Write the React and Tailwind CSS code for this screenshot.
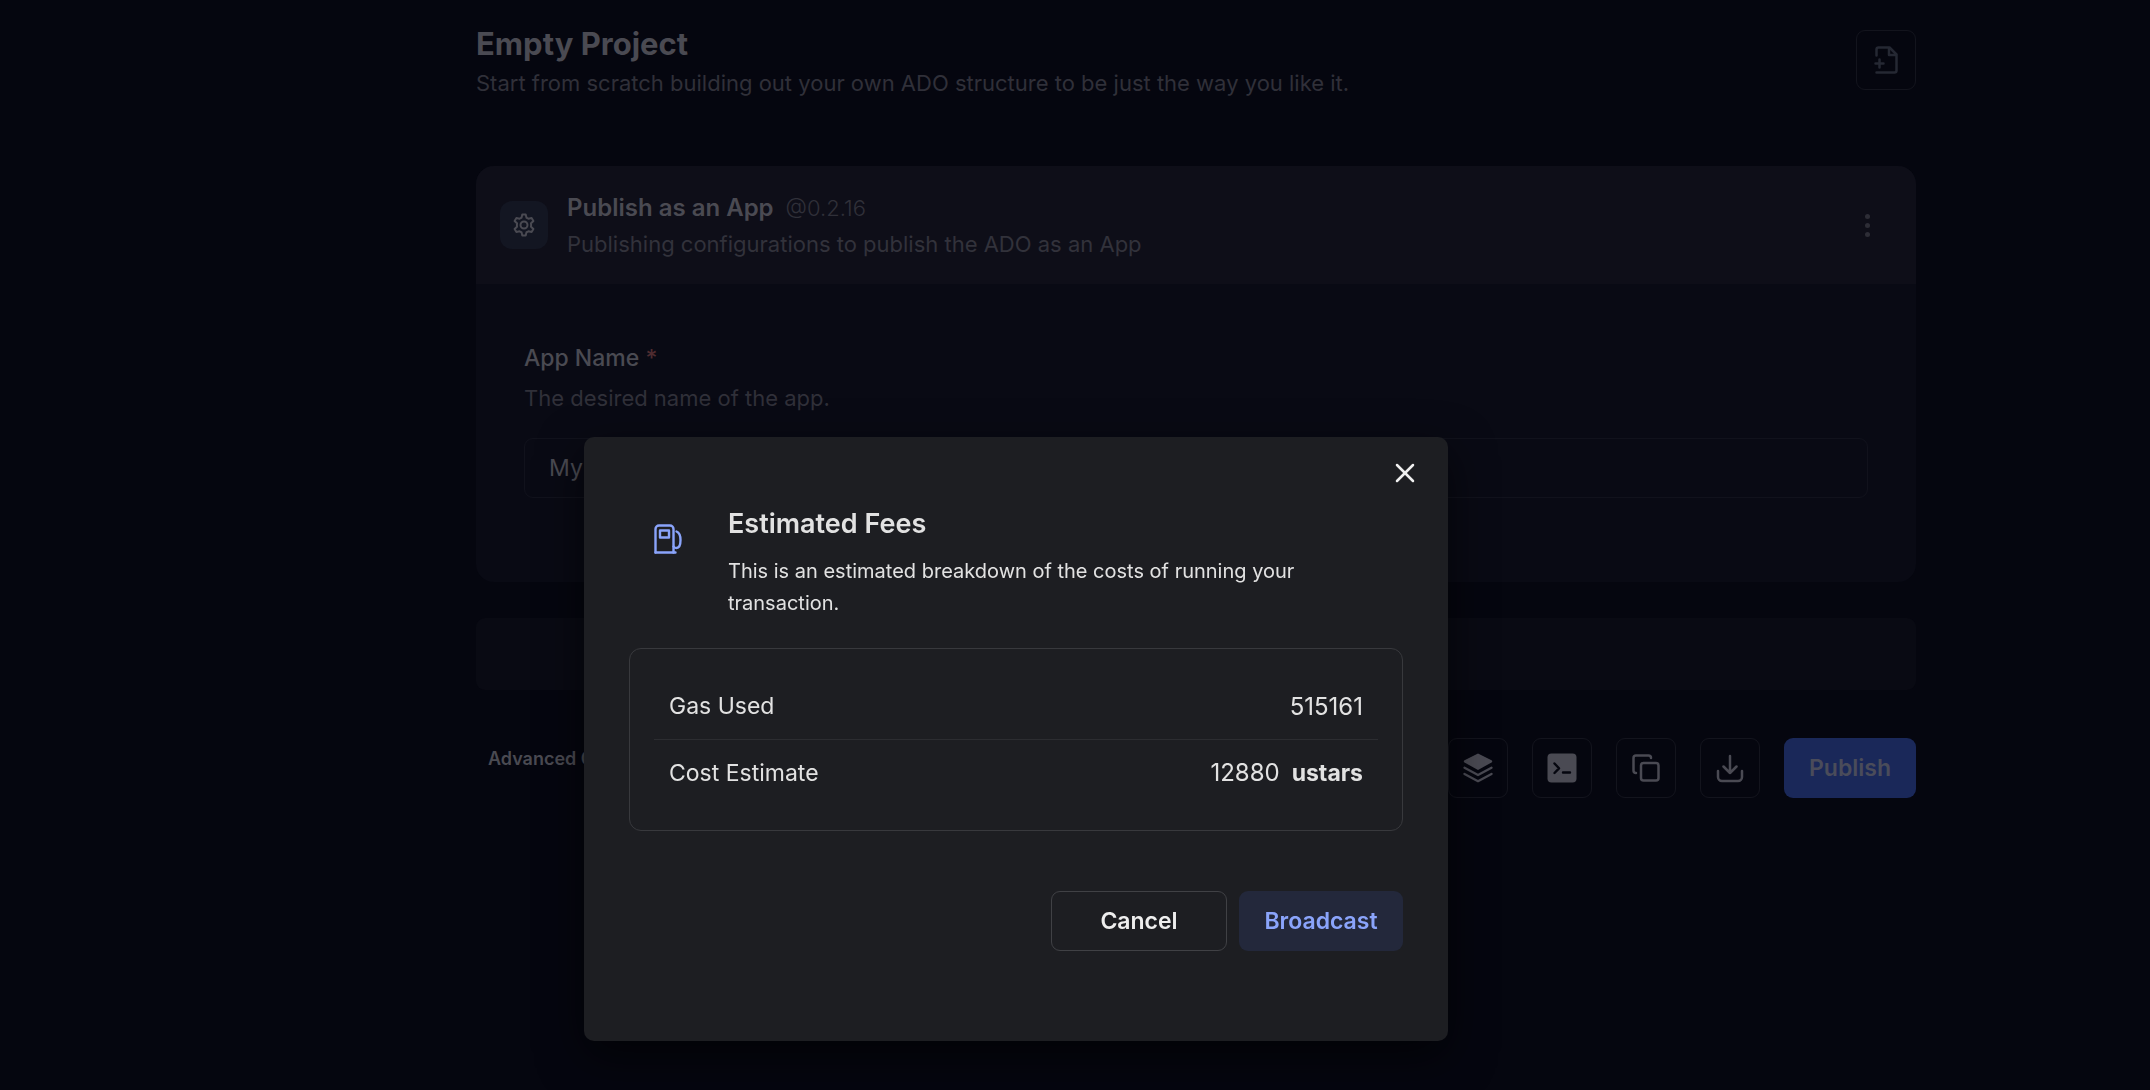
import { Copy, X } from "lucide-react";

const iconButton =
  "flex size-[60px] shrink-0 items-center justify-center rounded-[9px] border border-[#13141d] text-[#4a4a53]";

function GearIcon() {
  return (
    <svg viewBox="0 0 24 24" className="size-6 text-[#4a4a52]" fill="none" stroke="currentColor" strokeWidth="2" strokeLinejoin="round" aria-hidden="true">
      <path d="M10.300 1.500h3.400l.8 3.300q1 .3 1.900 1l3.200-.8 1.800 3-2.400 2.300q.2 1.700 0 3.400l2.400 2.300-1.800 3-3.200-.8q-.9.7-1.900 1l-.8 3.300h-3.400l-.8-3.300q-1-.3-1.900-1l-3.200.8-1.800-3 2.400-2.300q-.2-1.700 0-3.400L2.600 8l1.800-3 3.200.8q.9-.7 1.900-1z" />
      <circle cx="12" cy="12" r="3.500" />
    </svg>
  );
}

function FilePlusIcon() {
  return (
    <svg viewBox="0 0 30 30" className="size-[30px] text-[#252833]" fill="none" stroke="currentColor" strokeWidth="2.500" strokeLinecap="round" strokeLinejoin="round" aria-hidden="true">
      <path d="M5.500 10.500V4.500A2 2 0 0 1 7.500 2.500H18.500L25.500 9.500V25.500A2 2 0 0 1 23.500 27.500H5.500" />
      <path d="M18 3V10H25M4.500 18.500h8M8.500 14.500v8" />
    </svg>
  );
}

function LayersIcon() {
  return (
    <svg viewBox="0 0 30 30" className="size-[30px]" fill="currentColor" aria-hidden="true">
      <path d="M15 .5 28.500 7.300Q30 8.400 28.500 9.500L15 17 1.500 9.500Q0 8.400 1.500 7.300Z" />
      <path d="M1.500 14.700 15 22l13.500-7.300M1.500 20.900 15 28.200l13.500-7.300" fill="none" stroke="currentColor" strokeWidth="2.300" strokeLinecap="round" strokeLinejoin="round" />
    </svg>
  );
}

function TerminalIcon() {
  return (
    <svg viewBox="0 0 30 30" className="size-[30px]" fill="none" aria-hidden="true">
      <rect x="0.500" y="0.500" width="29" height="29" rx="4" fill="currentColor" />
      <path d="m7.500 10.500 4.500 4.800-4.500 4.700M16 19.500h7" stroke="#05060f" strokeWidth="2.400" strokeLinecap="round" strokeLinejoin="round" />
    </svg>
  );
}

function DownloadIcon() {
  return (
    <svg viewBox="0 0 30 30" className="size-[30px]" fill="none" stroke="currentColor" strokeWidth="2.500" strokeLinecap="round" strokeLinejoin="round" aria-hidden="true">
      <path d="M15 3v17M8.500 13.500 15 20l6.500-6.500M3 18v6a4 4 0 0 0 4 4h16a4 4 0 0 0 4-4v-6" />
    </svg>
  );
}

function FuelIcon() {
  return (
    <svg viewBox="0 0 30 30" className="size-[30px] text-[#8aa4fb]" fill="none" stroke="currentColor" strokeWidth="2.400" strokeLinecap="round" strokeLinejoin="round" aria-hidden="true">
      <path d="M2.500 28.500V5a3.500 3.500 0 0 1 3.500-3.500h11a3.500 3.500 0 0 1 3.500 3.500v23.500" />
      <path d="M2.500 28.500h20M7 6.500h9v7H7zM23.500 7.500c2.500 1 4 4.500 4 8.500 0 5-1.500 8-4 8-1.500 0-2.500-.5-3-1.500" />
    </svg>
  );
}

export default function App() {
  return (
    <div className="min-h-screen bg-[#05060f] pl-[242px] font-[Inter,sans-serif] text-[#4a4a52]">
      <main className="mx-auto w-full max-w-[1440px] pt-6 pb-12">
        <header className="flex items-start justify-between pt-[6px]">
          <div className="-mt-1">
            <h1 className="text-[31px] leading-9 font-bold">Empty Project</h1>
            <p className="mt-1 text-[22px] leading-[34px] text-[#303039]">
              Start from scratch building out your own ADO structure to be just the way you like it.
            </p>
          </div>
          <button type="button" aria-label="Import project" className={iconButton}>
            <FilePlusIcon />
          </button>
        </header>

        <section className="mt-[66px] overflow-hidden rounded-[18px] bg-[#090a14]">
          <div className="flex h-[118px] items-center bg-[#0e0e18] px-6">
            <span className="flex size-12 items-center justify-center rounded-xl bg-[#131622]">
              <GearIcon />
            </span>
            <div className="ml-[19px] flex-1 pt-[2px]">
              <div className="flex items-center gap-3">
                <h2 className="text-2xl leading-9 font-semibold">Publish as an App</h2>
                <span className="text-[22px] leading-9 font-light text-[#303039]">@0.2.16</span>
              </div>
              <p className="text-[22px] leading-9 text-[#32323b]">
                Publishing configurations to publish the ADO as an App
              </p>
            </div>
            <button type="button" aria-label="More options" className="flex w-[50px] flex-col items-center gap-1 text-[#2d2d36]">
              <span className="size-[5px] rounded-full bg-current" />
              <span className="size-[5px] rounded-full bg-current" />
              <span className="size-[5px] rounded-full bg-current" />
            </button>
          </div>
          <div className="px-12 pt-14 pb-[84px]">
            <label htmlFor="app-name" className="block text-[23px] leading-9 font-medium">
              App Name <span className="text-[#4f2c30]">*</span>
            </label>
            <p className="mt-1 text-[22px] leading-9 text-[#303039]">The desired name of the app.</p>
            <input
              id="app-name"
              type="text"
              defaultValue="My App"
              className="mt-[22px] block h-[60px] w-full rounded-[9px] border border-[#11121c] bg-transparent px-6 text-[23px] text-[#4a4a52]"
            />
          </div>
        </section>

        <div className="mt-9 h-[72px] rounded-[9px] bg-[#090a13]" />

        <div className="mt-12 flex items-start justify-between">
          <button type="button" className="mt-[7px] px-3 text-lg leading-7 font-semibold">
            Advanced Options
          </button>
          <div className="flex gap-6">
            <button type="button" aria-label="Layers" className={iconButton}>
              <LayersIcon />
            </button>
            <button type="button" aria-label="Terminal" className={iconButton}>
              <TerminalIcon />
            </button>
            <button type="button" aria-label="Copy" className={iconButton}>
              <Copy className="size-[30px]" strokeWidth={2} />
            </button>
            <button type="button" aria-label="Download" className={iconButton}>
              <DownloadIcon />
            </button>
            <button type="button" className="h-[60px] min-w-[132px] rounded-[9px] bg-[#1a2859] px-6 text-[23px] font-semibold text-[#4a4c5a]">
              Publish
            </button>
          </div>
        </div>
      </main>

      <div className="fixed inset-0 flex items-start justify-center overflow-auto pt-[437px] pr-[118px]">
        <div
          role="dialog"
          aria-modal="true"
          aria-labelledby="fees-title"
          className="relative w-full max-w-[864px] rounded-[10px] bg-[#1d1e22] px-[45px] pt-[67px] pb-[90px] text-[#e2e2e2] shadow-[0_15px_45px_rgba(0,0,0,0.6)]"
        >
          <button type="button" aria-label="Close" className="absolute top-3 right-[19px] flex size-12 items-center justify-center text-[#f0f0f0]">
            <X className="size-8" strokeWidth={1.9} />
          </button>
          <div className="flex pl-6">
            <div className="mt-5 w-[75px] shrink-0">
              <FuelIcon />
            </div>
            <div className="pr-20">
              <h2 id="fees-title" className="text-[27px] leading-10 font-semibold">Estimated Fees</h2>
              <p className="mt-[11px] text-[20px] leading-8">
                This is an estimated breakdown of the costs of running your transaction.
              </p>
            </div>
          </div>
          <dl className="mt-[29px] rounded-xl border border-[#38393d] px-6 pt-[25px] pb-6 text-[23px]">
            <div className="flex h-[66px] items-center justify-between border-b border-[#2c2d31] px-[15px]">
              <dt>Gas Used</dt>
              <dd className="text-2xl">515161</dd>
            </div>
            <div className="flex h-[66px] items-center justify-between px-[15px]">
              <dt>Cost Estimate</dt>
              <dd className="flex items-baseline gap-3">
                <span className="text-2xl">12880</span>
                <b className="font-bold">ustars</b>
              </dd>
            </div>
          </dl>
          <div className="mt-[60px] flex justify-end gap-3 text-[23px] font-semibold">
            <button type="button" className="h-[60px] min-w-[176px] rounded-[9px] border border-[#404145] px-12 text-[#eeeeee]">
              Cancel
            </button>
            <button type="button" className="h-[60px] min-w-[164px] rounded-[9px] bg-[#23283b] px-6 text-[#8aa4fb]">
              Broadcast
            </button>
          </div>
        </div>
      </div>
    </div>
  );
}
